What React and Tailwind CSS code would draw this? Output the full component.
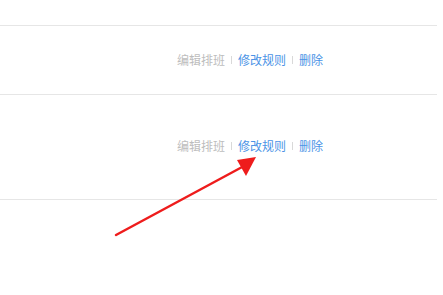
// App.jsx
function Actions() {
  return (
    <div className="flex items-center text-[12px] leading-[18px]">
      <a href="#" className="text-[#bdbdbd]">编辑排班</a>
      <span className="mx-[6px] inline-block h-[8px] w-px bg-[#d9d9d9]" />
      <a href="#" className="text-[#4b93e6]">修改规则</a>
      <span className="mx-[6px] inline-block h-[8px] w-px bg-[#d9d9d9]" />
      <a href="#" className="text-[#4b93e6]">删除</a>
    </div>
  );
}

export default function App() {
  return (
    <div
      className="relative w-[443px] h-[295px] bg-white overflow-hidden"
      style={{ fontFamily: '"Noto Sans CJK SC", "Liberation Sans", sans-serif' }}
    >
      <div className="w-[437px]">
        {/* header area */}
        <div className="h-[26px] border-b border-[#e6e6e6]" />

        {/* row 1 */}
        <div className="h-[69px] border-b border-[#e6e6e6] pt-[25px] pl-[177px]">
          <Actions />
        </div>

        {/* row 2 */}
        <div className="h-[105px] border-b border-[#e6e6e6] pt-[42px] pl-[177px]">
          <Actions />
        </div>
      </div>

      {/* annotation arrow */}
      <svg className="absolute left-0 top-0 pointer-events-none" width="443" height="295">
        <line x1="116" y1="235" x2="244" y2="166" stroke="#ee1c1c" strokeWidth="2.5" strokeLinecap="round" />
        <polygon points="256,157 237,160 246,176" fill="#ee1c1c" />
      </svg>
    </div>
  );
}
